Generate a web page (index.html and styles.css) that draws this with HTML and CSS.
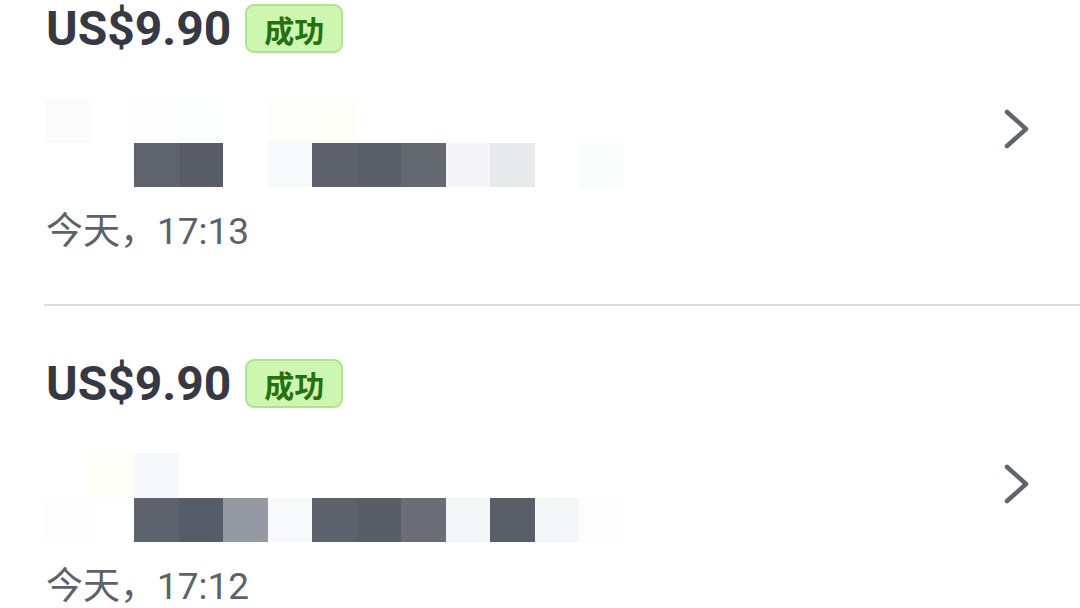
FILE: index.html
```html
<!DOCTYPE html>
<html lang="zh-CN">
<head>
<meta charset="utf-8">
<title>交易记录</title>
<link rel="stylesheet" href="styles.css">
</head>
<body>
<div class="list">
  <div class="item">
    <div class="content">
      <div class="head">
        <span class="price">US$9.90</span>
        <span class="badge">成功</span>
      </div>
      <div class="blocks">
        <i style="background:#fcfcfc"></i><i></i><i style="background:#fdfdfd"></i><i style="background:#fcfdfd"></i><i></i><i style="background:#fdfdfb"></i><i style="background:#fefef8"></i><i></i><i></i><i></i><i></i><i></i><i></i>
        <i></i><i></i><i style="background:#5f636d"></i><i style="background:#585d68"></i><i></i><i style="background:#f8f9fb"></i><i style="background:#5d616b"></i><i style="background:#5b5f6a"></i><i style="background:#646971"></i><i style="background:#f5f5f7"></i><i style="background:#e8e9eb"></i><i></i><i style="background:#fbfcfc"></i>
      </div>
      <div class="date">今天，17:13</div>
    </div>
    <svg class="chev" viewBox="0 0 27 44" width="27" height="44"><path d="M4 5 L23 22 L4 39"/></svg>
  </div>
  <div class="item">
    <div class="content">
      <div class="head">
        <span class="price">US$9.90</span>
        <span class="badge">成功</span>
      </div>
      <div class="blocks">
        <i></i><i style="background:#fefef8"></i><i style="background:#f7f8fb"></i><i></i><i></i><i></i><i></i><i></i><i></i><i></i><i></i><i></i><i></i>
        <i style="background:#fdfdfd"></i><i></i><i style="background:#5e626c"></i><i style="background:#575d68"></i><i style="background:#9599a3"></i><i style="background:#f8f9fb"></i><i style="background:#5d616b"></i><i style="background:#585d68"></i><i style="background:#6b6e78"></i><i style="background:#f5f6f8"></i><i style="background:#5a5e69"></i><i style="background:#f5f6f8"></i><i style="background:#fcfdfc"></i>
      </div>
      <div class="date">今天，17:12</div>
    </div>
    <svg class="chev" viewBox="0 0 27 44" width="27" height="44"><path d="M4 5 L23 22 L4 39"/></svg>
  </div>
</div>
</body>
</html>
```
FILE: styles.css
```css
html, body {
  margin: 0;
  padding: 0;
  background: #ffffff;
  overflow: hidden;
}

.list {
  margin-top: -49px;
}

.item {
  display: flex;
  align-items: center;
  margin-left: 44px;
  padding: 53px 50px 50px 0;
  border-bottom: 2px solid #dcdcdc;
}

.content {
  flex: 1;
  display: flex;
  flex-direction: column;
}

.head {
  display: flex;
  align-items: center;
  gap: 14px;
  height: 49px;
  padding-left: 2px;
}

.price {
  font-family: Roboto, "Noto Sans", sans-serif;
  font-weight: 700;
  font-size: 48px;
  line-height: 1;
  color: #363943;
}

.badge {
  box-sizing: border-box;
  height: 49px;
  display: flex;
  align-items: center;
  padding: 0 17px;
  border: 2px solid #aee48f;
  border-radius: 9px;
  background: #cdf7b1;
  color: #27700f;
  font-family: "Noto Sans CJK SC", sans-serif;
  font-weight: 700;
  font-size: 30px;
  line-height: 1;
}

.blocks {
  margin-top: 45px;
  margin-left: 1px;
  display: grid;
  grid-template-columns: repeat(13, 44.5px);
  grid-auto-rows: 44.5px;
}

.blocks i {
  display: block;
}

.date {
  margin-top: 23px;
  padding-left: 2px;
  font-family: Roboto, "Noto Sans CJK SC", sans-serif;
  font-weight: 400;
  font-size: 37px;
  line-height: 44px;
  color: #5d6169;
}

.chev {
  flex: none;
  fill: none;
  stroke: #60646d;
  stroke-width: 4.5;
  stroke-linecap: round;
  stroke-linejoin: round;
}
```
